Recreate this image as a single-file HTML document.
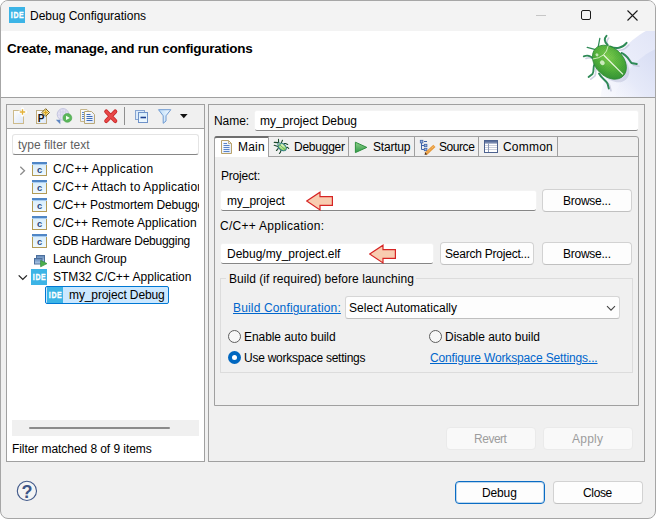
<!DOCTYPE html>
<html>
<head>
<meta charset="utf-8">
<title>Debug Configurations</title>
<style>
html,body{margin:0;padding:0;background:#fff;}
body{width:656px;height:519px;overflow:hidden;position:relative;font-family:"Liberation Sans",sans-serif;font-size:12px;color:#000;}
#win{position:absolute;left:0;top:0;width:656px;height:519px;box-sizing:border-box;border:1px solid #a6a6a6;border-radius:8px;background:#f0f0f0;overflow:hidden;}
#c{position:absolute;left:-1px;top:-1px;width:656px;height:519px;}
.abs{position:absolute;}
.t{position:absolute;white-space:nowrap;line-height:14px;height:14px;}
.box{position:absolute;box-sizing:border-box;}
.panel{position:absolute;border:1px solid #a0a0a0;box-sizing:border-box;}
.input{position:absolute;background:#fff;box-sizing:border-box;border:0 solid #fff;border-bottom:1px solid #868686;border-radius:2px;box-shadow:0 0 0 0.5px #f6f6f6;}
.btn{position:absolute;box-sizing:border-box;background:#fdfdfd;border:1px solid #d2d2d2;border-bottom-color:#c0c0c0;border-radius:4px;}
.btn.dis{background:#f9f9f9;border-color:#eaeaea;}
.btn.def{border:1px solid #0a6cc4;box-shadow:inset 0 0 0 1px rgba(0,103,192,0.25);}
.link{color:#0066cc;text-decoration:underline;text-underline-offset:1px;}
.radio{position:absolute;box-sizing:border-box;width:13px;height:13px;border:1px solid #5f5f5f;border-radius:50%;background:#f7f7f7;}
.radio.on{border:none;background:#0067c0;}
.radio.on::after{content:"";position:absolute;left:4px;top:4px;width:5px;height:5px;border-radius:50%;background:#fff;}
.vsep{position:absolute;width:1px;background:#a0a0a0;}
#tr2,#tr3{overflow:hidden;width:146px;}

</style>
</head>
<body>
<div id="win"><div id="c">
<div class="box" style="left:0;top:0;width:656px;height:31px;background:#f3f3f3;"></div>
<div class="box" style="left:0;top:31px;width:656px;height:66px;background:#fff;"></div>
<div class="box" style="left:0;top:97px;width:656px;height:1px;background:#a0a0a0;"></div>

<!-- title bar icon -->
<svg class="abs" style="left:9px;top:7px" width="16" height="16" viewBox="0 0 16 16"><g transform="translate(0 0)"><rect width="16" height="16" fill="#3cb4e6"/>
      <g font-family="Liberation Sans, sans-serif" font-weight="bold" font-size="9.3" fill="#fff" stroke="#fff" stroke-width="0.35" transform="translate(0 11.4) scale(0.745 1)">
        <text x="2.3" y="0">I</text><text x="6.0" y="0">D</text><text x="13.4" y="0">E</text>
      </g></g></svg>
<!-- window controls -->
<svg class="abs" style="left:530px;top:0px" width="126" height="31" viewBox="0 0 126 31">
  <line x1="6" y1="15.5" x2="16" y2="15.5" stroke="#c6c6c6" stroke-width="1"/>
  <rect x="51.5" y="10.5" width="9" height="9" rx="1.5" fill="none" stroke="#1a1a1a" stroke-width="1"/>
  <path d="M97.5 10.5 L107.5 20.5 M107.5 10.5 L97.5 20.5" stroke="#1a1a1a" stroke-width="1.1" fill="none"/>
</svg>

<!-- left panel -->
<div class="panel" style="left:6px;top:104px;width:199px;height:358px;background:#fff;"></div>
<div class="box" style="left:7px;top:105px;width:197px;height:24px;background:#f0f0f0;border-bottom:1px solid #a0a0a0;"></div>
<div class="input" style="left:12px;top:134px;width:187px;height:21px;border:1px solid #e4e4e4;border-bottom:1px solid #868686;border-radius:3px;box-shadow:none;"></div>
<div class="box" style="left:12px;top:420px;width:187px;height:16px;background:#f0f0f0;"></div>
<div class="box" style="left:29px;top:427px;width:141px;height:2px;background:#8b8b8b;border-radius:1px;"></div>
<!-- selection -->
<div class="box" style="left:45px;top:286px;width:124px;height:18px;background:#cce8ff;border:1px solid #0078d4;border-radius:2px;"></div>

<!-- right panel -->
<div class="panel" style="left:208px;top:104px;width:437px;height:358px;"></div>
<div class="input" style="left:255px;top:111px;width:383px;height:20px;"></div>

<!-- tab folder -->
<div class="box" style="left:214px;top:136px;width:425px;height:270px;border:1px solid #a0a0a0;border-radius:3px 3px 0 0;"></div>
<div class="box" style="left:215px;top:156px;width:423px;height:1px;background:#a0a0a0;"></div>
<div class="box" style="left:214px;top:136px;width:55px;height:21px;background:#fff;border:1px solid #a0a0a0;border-bottom:none;border-top:2px solid #6e6e6e;border-radius:3px 0 0 0;"></div>
<div class="vsep" style="left:348px;top:137px;height:19px;"></div>
<div class="vsep" style="left:414px;top:137px;height:19px;"></div>
<div class="vsep" style="left:478px;top:137px;height:19px;"></div>
<div class="vsep" style="left:557px;top:137px;height:19px;"></div>

<!-- form -->
<div class="input" style="left:221px;top:191px;width:315px;height:20px;"></div>
<div class="btn" style="left:542px;top:189px;width:90px;height:23px;"></div>
<div class="input" style="left:221px;top:244px;width:212px;height:20px;"></div>
<div class="btn" style="left:440px;top:242px;width:94px;height:23px;"></div>
<div class="btn" style="left:542px;top:242px;width:90px;height:23px;"></div>
<!-- group -->
<div class="box" style="left:220px;top:278px;width:413px;height:95px;border:1px solid #dcdcdc;"></div>
<div class="box" style="left:345px;top:296px;width:275px;height:23px;background:#fdfdfd;border:1px solid #d6d6d6;border-bottom-color:#bfbfbf;border-radius:3px;"></div>
<svg class="abs" style="left:605px;top:303px" width="12" height="10" viewBox="0 0 12 10"><path d="M2 3.2 L6 7.2 L10 3.2" fill="none" stroke="#444" stroke-width="1.1"/></svg>
<div class="radio" style="left:228px;top:330px;"></div>
<div class="radio" style="left:429px;top:330px;"></div>
<div class="radio on" style="left:228px;top:351px;"></div>

<!-- bottom buttons -->
<div class="btn dis" style="left:446px;top:427px;width:90px;height:23px;"></div>
<div class="btn dis" style="left:543px;top:427px;width:90px;height:23px;"></div>
<div class="btn def" style="left:455px;top:481px;width:90px;height:23px;"></div>
<div class="btn" style="left:553px;top:481px;width:90px;height:23px;"></div>

<!-- shared defs -->
<svg width="0" height="0" style="position:absolute">
  <defs>
    <linearGradient id="gDoc" x1="0" y1="0" x2="1" y2="1"><stop offset="0" stop-color="#ffffff"/><stop offset="1" stop-color="#dbe6f8"/></linearGradient>
    <linearGradient id="gC" x1="0" y1="0" x2="0" y2="1"><stop offset="0" stop-color="#d6ecfb"/><stop offset="1" stop-color="#f0f9ff"/></linearGradient>
    <linearGradient id="gFun" x1="0" y1="0" x2="1" y2="0"><stop offset="0" stop-color="#bcdcf8"/><stop offset="1" stop-color="#f2f9ff"/></linearGradient>
    <linearGradient id="gPlay" x1="0" y1="0" x2="0" y2="1"><stop offset="0" stop-color="#8fd08a"/><stop offset="1" stop-color="#2f9a48"/></linearGradient>
    <linearGradient id="gWinB" x1="0" y1="0" x2="0" y2="1"><stop offset="0" stop-color="#5f86b8"/><stop offset="1" stop-color="#b8d0ea"/></linearGradient>
    <radialGradient id="gBugS" cx="0.4" cy="0.35" r="0.7"><stop offset="0" stop-color="#e4f6c4"/><stop offset="1" stop-color="#7cc850"/></radialGradient>
    <radialGradient id="gBug" cx="0.38" cy="0.4" r="0.75"><stop offset="0" stop-color="#7fce4e"/><stop offset="0.55" stop-color="#4fae3a"/><stop offset="1" stop-color="#2c8a34"/></radialGradient>
    <linearGradient id="gSw1" gradientUnits="userSpaceOnUse" x1="656" y1="31" x2="584" y2="103"><stop offset="0" stop-color="#e1e5f7"/><stop offset="0.55" stop-color="#eef0fb"/><stop offset="1" stop-color="#ffffff"/></linearGradient>
    <linearGradient id="gSw2" gradientUnits="userSpaceOnUse" x1="660" y1="50" x2="610" y2="100"><stop offset="0" stop-color="#d6dcf3"/><stop offset="0.6" stop-color="#e4e8f8" stop-opacity="0.8"/><stop offset="1" stop-color="#f4f5fc" stop-opacity="0"/></linearGradient>

    <pattern id="pDots" width="1.7" height="1.7" patternUnits="userSpaceOnUse"><circle cx="0.6" cy="0.6" r="0.38" fill="#1f6a2a" opacity="0.42"/></pattern>
  </defs>
</svg>

<!-- toolbar icons: drawn in page coords -->
<svg class="abs" style="left:0;top:100px" width="210" height="32" viewBox="0 100 210 32">
  <!-- new -->
  <rect x="13.5" y="110.5" width="10" height="13" fill="url(#gDoc)" stroke="#cdbb8c"/>
  <path d="M22.5 108.8 V115.2 M19.3 112 H25.7" stroke="#fff" stroke-width="3" stroke-linecap="round"/>
  <path d="M22.5 109.3 V114.7 M19.8 112 H25.2" stroke="#e3b23a" stroke-width="1.4"/>
  <!-- new prototype -->
  <rect x="36.5" y="110.5" width="10" height="13" fill="url(#gDoc)" stroke="#bfae80"/>
  <text x="37.8" y="122.1" font-family="Liberation Sans, sans-serif" font-weight="bold" font-size="10" fill="#111">P</text>
  <path d="M45.7 108.7 L49.5 112.5 L45.7 116.3 L41.9 112.5 Z" fill="#fbefb4" stroke="#7d6118" stroke-width="1"/>
  <path d="M45.7 110.3 V114.7 M43.5 112.5 H47.9" stroke="#d9a51e" stroke-width="1.4"/>
  <!-- export/launch -->
  <circle cx="63" cy="114.4" r="5.8" fill="#e4e2f3" stroke="#c3c4df" stroke-width="1"/>
  <path d="M58.5 112 H67.5 M58 115 H68 M63 109 V120 M60.5 110 V119 M65.5 110 V119" stroke="#cfcfe6" stroke-width="0.7"/>
  <path d="M55.8 119.8 H60.3 V124.3 Z" fill="#5f87c4"/>
  <circle cx="67.4" cy="117.9" r="4.4" fill="#5bb75b" stroke="#4aa24a" stroke-width="0.6"/>
  <path d="M66 115.7 L69.9 117.9 L66 120.1 Z" fill="#f4fff4"/>
  <!-- duplicate -->
  <path d="M80.5 109.5 H87 L90 112.5 V121.5 H80.5 Z" fill="url(#gDoc)" stroke="#c7b78c"/>
  <path d="M82 112.5 H84.5 M82 114.5 H84.5 M82 116.5 H84.5 M82 118.5 H84.5" stroke="#5f88c8" stroke-width="1"/>
  <path d="M84.5 111.5 H91.5 L94.5 114.5 V123.5 H84.5 Z" fill="url(#gDoc)" stroke="#b9a878"/>
  <path d="M86.5 114.5 H90.5 M86.5 116.5 H92.5 M86.5 118.5 H92.5 M86.5 120.5 H92.5" stroke="#3f6cb8" stroke-width="1"/>
  <!-- delete -->
  <path d="M106.3 111.6 L115.2 120.9 M115.2 111.6 L106.3 120.9" stroke="#c62828" stroke-width="4.2" stroke-linecap="round"/>
  <path d="M106.3 111.6 L115.2 120.9 M115.2 111.6 L106.3 120.9" stroke="#e84848" stroke-width="2.6" stroke-linecap="round"/>
  <!-- separator -->
  <rect x="124" y="107" width="1" height="18" fill="#8f8f8f"/>
  <!-- collapse all -->
  <rect x="135.5" y="110.5" width="9" height="9" fill="#dcebfa" stroke="#86a5d2"/>
  <rect x="138.5" y="112.5" width="9" height="10" fill="url(#gC)" stroke="#6f92c8"/>
  <rect x="140.5" y="116.7" width="5.5" height="1.6" fill="#1d3f8f"/>
  <!-- filter -->
  <path d="M158.5 109.7 H170.8 L166 115.8 V121 L163.2 123.3 V115.8 Z" fill="url(#gFun)" stroke="#6f9ad2" stroke-width="1" stroke-linejoin="round"/>
  <!-- menu arrow -->
  <path d="M180 114 H187.6 L183.8 118.2 Z" fill="#111"/>
</svg>

<!-- tree icons -->
<svg class="abs" style="left:0;top:158px" width="70" height="150" viewBox="0 158 70 150">
  <path d="M20.3 166.8 L24.5 170.8 L20.3 174.8" fill="none" stroke="#8c8c8c" stroke-width="1.3"/>
  <g transform="translate(32 162)"><rect x="0.5" y="1.5" width="14" height="12" fill="url(#gC)" stroke="#b39b55" stroke-width="1"/>
      <rect x="0" y="0" width="15" height="2" fill="#4f86c6"/>
      <rect x="0" y="2" width="15" height="1" fill="#a9cdf0"/>
      <text x="7.5" y="11.2" font-family="Liberation Sans, sans-serif" font-weight="bold" font-size="9.4" fill="#2c4a80" text-anchor="middle">c</text></g>
  <g transform="translate(32 180)"><rect x="0.5" y="1.5" width="14" height="12" fill="url(#gC)" stroke="#b39b55" stroke-width="1"/>
      <rect x="0" y="0" width="15" height="2" fill="#4f86c6"/>
      <rect x="0" y="2" width="15" height="1" fill="#a9cdf0"/>
      <text x="7.5" y="11.2" font-family="Liberation Sans, sans-serif" font-weight="bold" font-size="9.4" fill="#2c4a80" text-anchor="middle">c</text></g>
  <g transform="translate(32 198)"><rect x="0.5" y="1.5" width="14" height="12" fill="url(#gC)" stroke="#b39b55" stroke-width="1"/>
      <rect x="0" y="0" width="15" height="2" fill="#4f86c6"/>
      <rect x="0" y="2" width="15" height="1" fill="#a9cdf0"/>
      <text x="7.5" y="11.2" font-family="Liberation Sans, sans-serif" font-weight="bold" font-size="9.4" fill="#2c4a80" text-anchor="middle">c</text></g>
  <g transform="translate(32 216)"><rect x="0.5" y="1.5" width="14" height="12" fill="url(#gC)" stroke="#b39b55" stroke-width="1"/>
      <rect x="0" y="0" width="15" height="2" fill="#4f86c6"/>
      <rect x="0" y="2" width="15" height="1" fill="#a9cdf0"/>
      <text x="7.5" y="11.2" font-family="Liberation Sans, sans-serif" font-weight="bold" font-size="9.4" fill="#2c4a80" text-anchor="middle">c</text></g>
  <g transform="translate(32 234)"><rect x="0.5" y="1.5" width="14" height="12" fill="url(#gC)" stroke="#b39b55" stroke-width="1"/>
      <rect x="0" y="0" width="15" height="2" fill="#4f86c6"/>
      <rect x="0" y="2" width="15" height="1" fill="#a9cdf0"/>
      <text x="7.5" y="11.2" font-family="Liberation Sans, sans-serif" font-weight="bold" font-size="9.4" fill="#2c4a80" text-anchor="middle">c</text></g>
  <!-- launch group -->
  <rect x="36.5" y="255.5" width="8" height="6.5" fill="url(#gWinB)" stroke="#4c6f9c"/>
  <rect x="34.5" y="258.5" width="7.5" height="5.5" fill="url(#gWinB)" stroke="#4c6f9c"/>
  <path d="M40.6 260.4 L47 263.6 L40.6 266.8 Z" fill="#4cb04c" stroke="#2f8f3a" stroke-width="0.7" stroke-linejoin="round"/>
  <path d="M18.7 275.4 L22.8 279.4 L26.9 275.4" fill="none" stroke="#222" stroke-width="1.3"/>
  <g transform="translate(31 269)"><rect width="16" height="16" fill="#3cb4e6"/>
      <g font-family="Liberation Sans, sans-serif" font-weight="bold" font-size="9.3" fill="#fff" stroke="#fff" stroke-width="0.35" transform="translate(0 11.4) scale(0.745 1)">
        <text x="2.3" y="0">I</text><text x="6.0" y="0">D</text><text x="13.4" y="0">E</text>
      </g></g>
  <g transform="translate(47 287)"><rect width="16" height="16" fill="#3cb4e6"/>
      <g font-family="Liberation Sans, sans-serif" font-weight="bold" font-size="9.3" fill="#fff" stroke="#fff" stroke-width="0.35" transform="translate(0 11.4) scale(0.745 1)">
        <text x="2.3" y="0">I</text><text x="6.0" y="0">D</text><text x="13.4" y="0">E</text>
      </g></g>
</svg>

<!-- tab icons -->
<svg class="abs" style="left:216px;top:137px" width="290" height="19" viewBox="216 137 290 19">
  <!-- main doc -->
  <path d="M221.5 140.5 H228.5 L231.5 143.5 V153.5 H221.5 Z" fill="url(#gDoc)" stroke="#b9a26a"/>
  <path d="M228.5 140.5 V143.5 H231.5" fill="none" stroke="#b9a26a" stroke-width="0.8"/>
  <path d="M223.5 143.5 H227 M223.5 145.5 H229.5 M223.5 147.5 H229.5 M223.5 149.5 H229.5 M223.5 151.5 H229.5" stroke="#5a84c8" stroke-width="1"/>
  <!-- bug small -->
  <g stroke="#1c4a2c" stroke-width="1.1" fill="none" stroke-linecap="round">
    <path d="M278.6 143.3 L278.5 139.4"/>
    <path d="M278 142.6 L274.2 142.4"/>
    <path d="M281.4 142.8 L282.5 140.3"/>
    <path d="M284 143.5 H285.6 L287.7 144.5"/>
    <path d="M286 147.6 L287.6 147.3 L288.7 148.5"/>
    <path d="M278 146.5 L274.2 145.3"/>
    <path d="M278.3 147.6 L277.6 149.4 L276.4 150.5"/>
    <path d="M281 150.4 L280.3 152.4 L279.4 153.5"/>
  </g>
  <ellipse cx="282.2" cy="147" rx="4.6" ry="3.2" transform="rotate(40 282.2 147)" fill="url(#gBugS)" stroke="#1f6f86" stroke-width="1"/>
  <circle cx="279" cy="144" r="1.3" fill="#d8f0b8" stroke="#1f6f86" stroke-width="0.7"/>
  <path d="M279.6 144.6 L285.3 149.8" stroke="#3f9a3a" stroke-width="0.7"/>
  <!-- startup play -->
  <path d="M355.4 142.2 L366.8 147.4 L355.4 152.6 Z" fill="url(#gPlay)" stroke="#2e8e3e" stroke-width="1" stroke-linejoin="round"/>
  <!-- source -->
  <rect x="420.3" y="140.3" width="2.6" height="2.6" fill="#9db4dc" stroke="#3c62a8" stroke-width="0.8"/>
  <rect x="424.3" y="144.3" width="2.6" height="2.4" fill="#9db4dc" stroke="#3c62a8" stroke-width="0.8"/>
  <rect x="424.3" y="148.3" width="2.6" height="2.4" fill="#9db4dc" stroke="#3c62a8" stroke-width="0.8"/>
  <path d="M424 141.5 H427 M421.5 143 V149.5 H424 M421.5 145.5 H424" stroke="#3c62a8" stroke-width="1" fill="none"/>
  <path d="M425.6 154 L434.4 145.9" stroke="#e89a3c" stroke-width="3.2" stroke-linecap="butt"/>
  <path d="M426.2 153.2 L434 146" stroke="#f8d088" stroke-width="1" stroke-dasharray="1 1"/>
  <path d="M424.6 155 L425.2 152.2 L427.2 154.3 Z" fill="#4a3020"/>
  <!-- common -->
  <rect x="484.5" y="140.5" width="13" height="12" fill="#fff" stroke="#4d628f"/>
  <rect x="485" y="141" width="12" height="2.5" fill="#5c719e"/>
  <rect x="485" y="142" width="12" height="0.6" fill="#8796b8"/>
  <path d="M485 145.5 H497 M485 147.5 H497 M485 149.5 H497" stroke="#c4c9d8" stroke-width="0.9"/>
  <path d="M488.5 143.5 V152" stroke="#8a97b6" stroke-width="1"/>
</svg>

<!-- red arrows -->
<svg class="abs" style="left:306px;top:191px" width="28" height="21" viewBox="0 0 28 21"><g transform="translate(0 0)"><path d="M0.7 10.1 L14 1.2 L14 5.6 L26.4 5.6 L26.4 14.4 L14 14.4 L14 19 Z" fill="#f8ccb0" stroke="#d62424" stroke-width="1.2" stroke-linejoin="miter"/></g></svg>
<svg class="abs" style="left:369px;top:244px" width="28" height="21" viewBox="0 0 28 21"><g transform="translate(0 0)"><path d="M0.7 10.1 L14 1.2 L14 5.6 L26.4 5.6 L26.4 14.4 L14 14.4 L14 19 Z" fill="#f8ccb0" stroke="#d62424" stroke-width="1.2" stroke-linejoin="miter"/></g></svg>

<!-- help icon -->
<svg class="abs" style="left:16px;top:480px" width="22" height="22" viewBox="0 0 22 22">
  <circle cx="10.9" cy="10.9" r="9.6" fill="#f4f4f4" stroke="#41598a" stroke-width="1.1"/>
  <text x="10.9" y="17.6" font-family="Liberation Sans, sans-serif" font-weight="bold" font-size="18" fill="#3d5587" text-anchor="middle">?</text>
</svg>

<!-- header banner -->
<svg class="abs" style="left:540px;top:31px" width="116" height="66" viewBox="540 31 116 66">
  <circle cx="690" cy="110" r="90.5" fill="url(#gSw1)"/>
  <circle cx="690" cy="120" r="79" fill="url(#gSw2)"/>
  <!-- shadow -->
  <ellipse cx="612.8" cy="65.8" rx="19" ry="13.5" transform="rotate(45 612.8 65.8)" fill="#b4b8d2" opacity="0.45"/>
  <!-- leg shadows -->
  <g fill="none" stroke="#c4c7dc" stroke-width="1.6" stroke-linecap="round" stroke-linejoin="round" opacity="0.8" transform="translate(2.2 2.2)">
    <path d="M607.6 45 C604.5 42 604 38.5 606.5 35.8"/>
    <path d="M610.5 46.5 C616 49.5 622.5 48 626.6 42.8"/>
    <path d="M621.5 53 C627 54.5 629 60.5 631.5 63 L636.8 64"/>
    <path d="M593.5 59 C591 56 587 55 583.8 56.3"/>
    <path d="M594.6 64 C592.5 68 594.5 71.5 592.5 74 L588.6 77"/>
    <path d="M599 73.5 C601.5 78.5 606 80.5 607.5 83.5 L608.8 88.5"/>
  </g>
  <!-- legs -->
  <g fill="none" stroke="#2f8a57" stroke-width="1.9" stroke-linecap="round" stroke-linejoin="round">
    <path d="M598 48 L599.8 38.5" stroke-width="1.3"/>
    <path d="M596.5 49.8 L587.2 47.4" stroke-width="1.3"/>
    <path d="M607.6 45 C604.5 42 604 38.5 606.5 35.8"/>
    <path d="M610.5 46.5 C616 49.5 622.5 48 626.6 42.8"/>
    <path d="M621.5 53 C627 54.5 629 60.5 631.5 63 L636.8 64"/>
    <path d="M593.5 59 C591 56 587 55 583.8 56.3"/>
    <path d="M594.6 64 C592.5 68 594.5 71.5 592.5 74 L588.6 77"/>
    <path d="M599 73.5 C601.5 78.5 606 80.5 607.5 83.5 L608.8 88.5"/>
  </g>
  <!-- body (local coords: -x = head) -->
  <g transform="translate(609.4 62.2) rotate(45)">
    <ellipse cx="0" cy="0" rx="19.5" ry="14" fill="url(#gBug)" stroke="#2c8636" stroke-width="0.8"/>
    <ellipse cx="0" cy="0" rx="18.6" ry="13.2" fill="url(#pDots)"/>
    <path d="M-14 9.5 Q-5.5 -1 -12.5 -10.8" fill="none" stroke="#dff3cf" stroke-width="0.9" opacity="0.9"/>
    <path d="M-9.2 -1 L18.2 -1" stroke="#eefae4" stroke-width="1.1"/>
    <ellipse cx="-4.6" cy="5.4" rx="2.6" ry="2.2" fill="#f0fce6" opacity="0.75"/>
    <ellipse cx="-14" cy="3.6" rx="1.6" ry="1.4" fill="#f0fce6" opacity="0.7"/>
  </g>
</svg>


<!-- text labels -->
<div class="t" id="wt" style="left:30.00px;top:9px;">Debug Configurations</div>
<div class="t" id="ht" style="left:7.00px;top:42px;letter-spacing:-0.254px;font-weight:bold;font-size:13.5px;">Create, manage, and run configurations</div>
<div class="t" id="ft" style="left:18.00px;top:138px;letter-spacing:0.013px;color:#5f5f5f;">type filter text</div>
<div class="t" id="tr1" style="left:53.00px;top:162px;letter-spacing:0.250px;">C/C++ Application</div>
<div class="t" id="tr2" style="left:53.00px;top:180px;letter-spacing:0.186px;">C/C++ Attach to Application</div>
<div class="t" id="tr3" style="left:53.00px;top:198px;letter-spacing:-0.150px;">C/C++ Postmortem Debugger</div>
<div class="t" id="tr4" style="left:53.00px;top:216px;letter-spacing:0.096px;">C/C++ Remote Application</div>
<div class="t" id="tr5" style="left:53.00px;top:234px;letter-spacing:-0.262px;">GDB Hardware Debugging</div>
<div class="t" id="tr6" style="left:53.00px;top:252px;letter-spacing:-0.218px;">Launch Group</div>
<div class="t" id="tr7" style="left:53.00px;top:270px;letter-spacing:0.018px;">STM32 C/C++ Application</div>
<div class="t" id="tr8" style="left:69.00px;top:288px;letter-spacing:-0.108px;">my_project Debug</div>
<div class="t" id="fm" style="left:12.00px;top:442px;letter-spacing:-0.065px;">Filter matched 8 of 9 items</div>
<div class="t" id="nm" style="left:214.00px;top:114px;letter-spacing:-0.050px;">Name:</div>
<div class="t" id="nv" style="left:260.00px;top:114px;letter-spacing:-0.027px;">my_project Debug</div>
<div class="t" id="tb1" style="left:238.00px;top:140px;letter-spacing:0.200px;">Main</div>
<div class="t" id="tb2" style="left:294.00px;top:140px;letter-spacing:-0.240px;">Debugger</div>
<div class="t" id="tb3" style="left:373.00px;top:140px;letter-spacing:-0.201px;">Startup</div>
<div class="t" id="tb4" style="left:439.00px;top:140px;letter-spacing:-0.440px;">Source</div>
<div class="t" id="tb5" style="left:503.00px;top:140px;letter-spacing:0.200px;">Common</div>
<div class="t" id="pl" style="left:221.00px;top:169px;letter-spacing:-0.200px;">Project:</div>
<div class="t" id="pv" style="left:227.00px;top:194px;letter-spacing:-0.089px;">my_project</div>
<div class="t" id="al" style="left:220.00px;top:219px;letter-spacing:0.271px;">C/C++ Application:</div>
<div class="t" id="av" style="left:227.00px;top:247px;">Debug/my_project.elf</div>
<div class="t" id="b1" style="left:563.00px;top:194px;letter-spacing:-0.250px;">Browse...</div>
<div class="t" id="b2" style="left:563.00px;top:247px;letter-spacing:-0.250px;">Browse...</div>
<div class="t" id="sp" style="left:445.00px;top:247px;letter-spacing:-0.225px;">Search Project...</div>
<div class="t" id="gt" style="left:229.00px;top:272px;letter-spacing:0.042px;background:#f0f0f0;padding:0 2px 0 3px;margin-left:-3px;">Build (if required) before launching</div>
<div class="t link" id="bc" style="left:233.00px;top:301px;letter-spacing:0.158px;">Build Configuration:</div>
<div class="t" id="sa" style="left:349.00px;top:301px;letter-spacing:0.034px;">Select Automatically</div>
<div class="t" id="r1" style="left:244.00px;top:330px;letter-spacing:-0.072px;">Enable auto build</div>
<div class="t" id="r3" style="left:445.00px;top:330px;letter-spacing:-0.023px;">Disable auto build</div>
<div class="t" id="r2" style="left:244.00px;top:351px;letter-spacing:-0.248px;">Use workspace settings</div>
<div class="t link" id="cw" style="left:430.00px;top:351px;letter-spacing:-0.140px;">Configure Workspace Settings...</div>
<div class="t" id="rv" style="left:474.00px;top:432px;letter-spacing:-0.480px;color:#9d9d9d;">Revert</div>
<div class="t" id="ap" style="left:572.00px;top:432px;letter-spacing:0.250px;color:#9d9d9d;">Apply</div>
<div class="t" id="db" style="left:482.00px;top:486px;letter-spacing:-0.132px;">Debug</div>
<div class="t" id="cl" style="left:583.00px;top:486px;letter-spacing:-0.350px;">Close</div>
</div></div>
</body>
</html>
